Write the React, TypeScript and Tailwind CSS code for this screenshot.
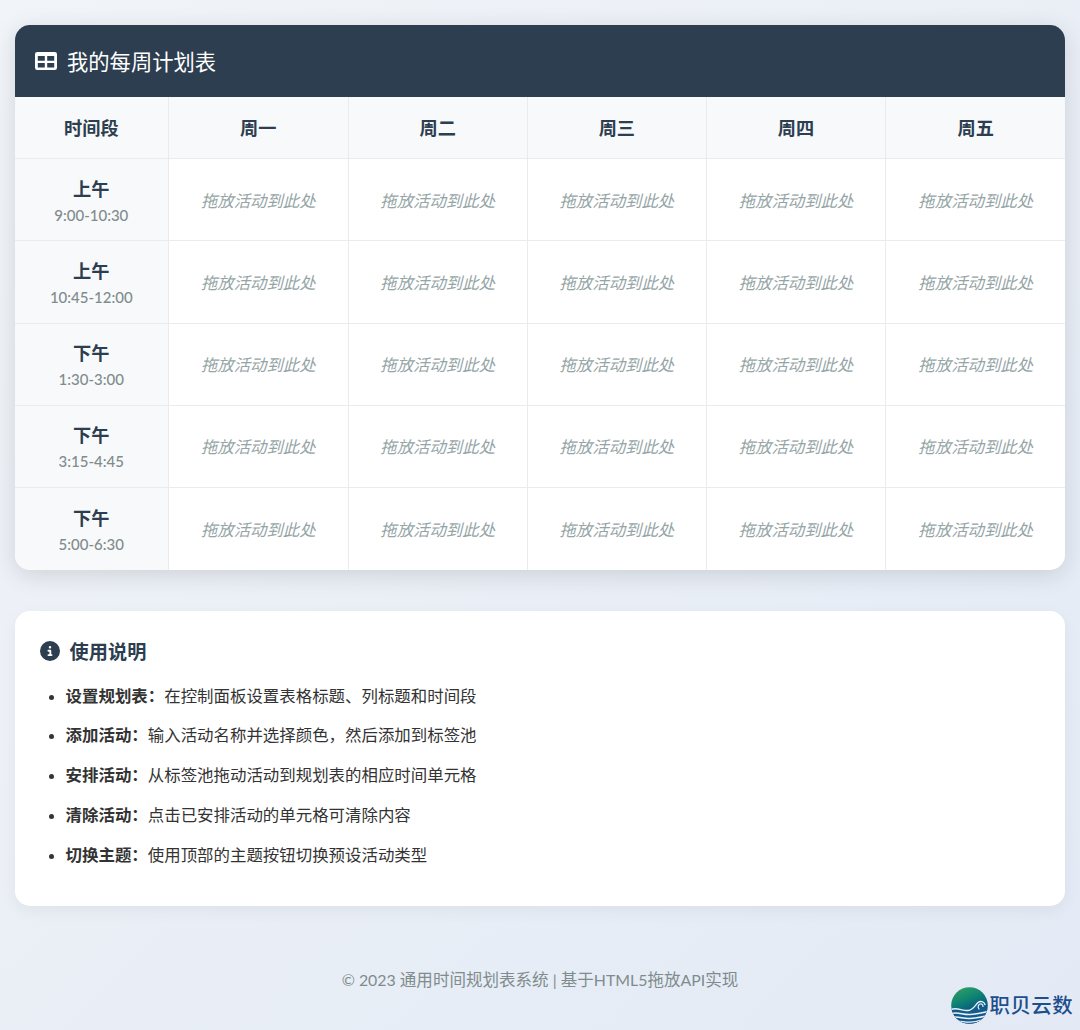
const font = { fontFamily: '"Lato", "Noto Sans CJK SC", sans-serif' };

const days = ["周一", "周二", "周三", "周四", "周五"];
const slots = [
  ["上午", "9:00-10:30"],
  ["上午", "10:45-12:00"],
  ["下午", "1:30-3:00"],
  ["下午", "3:15-4:45"],
  ["下午", "5:00-6:30"],
];
const tips = [
  ["设置规划表：", "在控制面板设置表格标题、列标题和时间段"],
  ["添加活动：", "输入活动名称并选择颜色，然后添加到标签池"],
  ["安排活动：", "从标签池拖动活动到规划表的相应时间单元格"],
  ["清除活动：", "点击已安排活动的单元格可清除内容"],
  ["切换主题：", "使用顶部的主题按钮切换预设活动类型"],
];

function TableIcon() {
  return (
    <svg className="mb-[1px]" width="22" height="18" viewBox="0 0 22 18" aria-hidden="true">
      <path
        fillRule="evenodd"
        fill="#ffffff"
        d="M2.2 0h17.6a2.2 2.2 0 0 1 2.2 2.2v13.6a2.2 2.2 0 0 1-2.2 2.2h-17.6a2.2 2.2 0 0 1-2.2-2.2v-13.6a2.2 2.2 0 0 1 2.2-2.2zM2.800 4v4.800h7v-4.800zM12.200 4v4.800h7v-4.800zM2.800 11v4.400h7v-4.400zM12.200 11v4.400h7v-4.400z"
      />
    </svg>
  );
}

function InfoIcon() {
  return (
    <svg className="mb-[2px]" width="20" height="20" viewBox="0 0 512 512" aria-hidden="true">
      <path
        fill="#2c3e50"
        d="M256 512A256 256 0 1 0 256 0a256 256 0 1 0 0 512zM216 336h24V272H216c-13.3 0-24-10.7-24-24s10.7-24 24-24h48c13.3 0 24 10.7 24 24v88h8c13.3 0 24 10.7 24 24s-10.7 24-24 24H216c-13.3 0-24-10.7-24-24s10.7-24 24-24zm40-208a32 32 0 1 1 0 64 32 32 0 1 1 0-64z"
      />
    </svg>
  );
}

function Logo() {
  return (
    <svg width="37" height="37" viewBox="0 0 37 37" aria-hidden="true">
      <defs>
        <linearGradient id="globe" x1="0.2" y1="0" x2="0.6" y2="1">
          <stop offset="0" stopColor="#2f9f63" />
          <stop offset="0.35" stopColor="#0f8572" />
          <stop offset="0.62" stopColor="#0a5f7c" />
          <stop offset="1" stopColor="#143f8c" />
        </linearGradient>
        <clipPath id="disc">
          <circle cx="18.5" cy="18.5" r="18.3" />
        </clipPath>
      </defs>
      <circle cx="18.5" cy="18.5" r="18.3" fill="url(#globe)" />
      <g clipPath="url(#disc)" fill="none" strokeLinecap="round">
        <path d="M0 22.500c6-2.500 11 1.500 17 1 5-.5 7-5 10-8 2.500-2 6-1 7 2 .6 2 1 4 3 5v14H0z" fill="#145a8c" stroke="none" />
        <path d="M0 22.500c6-2.500 11 1.500 17 1 5-.5 7-5 10-8 2.500-2 6-1 7 2" stroke="#e9f2f7" strokeWidth="1.4" />
        <path d="M28 22c-1.500-2-1-4 1-5 2-.7 3 1 3 2.500" stroke="#e9f2f7" strokeWidth="1.2" />
        <path d="M0 26.500c7-2 12 1.500 19 1 6-.3 11-1.500 18-3" stroke="#e9f2f7" strokeWidth="1.5" />
        <path d="M0 30.500c7-1.800 12 1.500 19 1 6-.3 11-1.500 18-3" stroke="#e9f2f7" strokeWidth="1.5" />
        <path d="M2 34.500c6-1.500 11 1 17 .6 5-.3 9-1 15-3" stroke="#e9f2f7" strokeWidth="1.4" />
      </g>
    </svg>
  );
}

export default function App() {
  return (
    <div
      className="relative h-[1030px] overflow-hidden bg-gradient-to-br from-[#f1f4f8] to-[#e3eaf5] pl-[14.6px] pt-[25px]"
      style={font}
    >
      <section className="w-[1050.8px] overflow-hidden rounded-[15px] bg-white shadow-[0_5px_25px_rgba(0,0,0,0.13)]">
        <header className="flex h-[72px] items-center gap-[10px] bg-[#2c3e50] pl-[20.4px] text-white">
          <TableIcon />
          <h1 className="pt-[3px] text-[21.3px] font-normal leading-none">我的每周计划表</h1>
        </header>
        <div className="grid grid-cols-[154.4px_179.6px_179.2px_179.2px_179.2px_179.2px] grid-rows-[62px_82px_82.5px_82px_82px_82.5px]">
          <div className="flex items-center justify-center border-r border-b border-[#e9ecef] bg-[#f8f9fa] pt-[3px] text-[18.2px] font-bold text-[#2c3e50]">
            时间段
          </div>
          {days.map((d, i) => (
            <div
              key={d}
              className={`flex items-center justify-center border-b border-[#e9ecef] bg-[#f8f9fa] pt-[3px] text-[18.2px] font-bold text-[#2c3e50] ${i < 4 ? "border-r" : ""}`}
            >
              {d}
            </div>
          ))}
          {slots.map(([label, time], r) => (
            <div key={time} className="contents">
              <div
                className={`flex flex-col items-center justify-center border-r border-[#e9ecef] bg-[#f8f9fa] pt-[2px] ${r < 4 ? "border-b" : ""}`}
              >
                <div className="text-[18.2px] font-bold leading-[24px] text-[#2c3e50]">{label}</div>
                <div className="pt-[4px] text-[15px] font-medium leading-[20px] text-[#7f8c8d]">{time}</div>
              </div>
              {days.map((d, i) => (
                <div
                  key={d}
                  className={`flex items-center justify-center border-[#e9ecef] pt-[3px] text-[16.4px] italic text-[#95a5a6] ${i < 4 ? "border-r" : ""} ${r < 4 ? "border-b" : ""}`}
                >
                  拖放活动到此处
                </div>
              ))}
            </div>
          ))}
        </div>
      </section>

      <section className="mt-[41px] h-[295px] w-[1050.8px] rounded-[15px] bg-white pl-[25px] pt-[28px] shadow-[0_5px_15px_rgba(0,0,0,0.05)]">
        <h2 className="flex items-center gap-[10px] text-[19.2px] font-bold leading-[26px] text-[#2c3e50]">
          <InfoIcon />
          使用说明
        </h2>
        <ul className="mt-[18.6px] list-disc pl-[26px] text-[16.45px] leading-[24px] text-[#333333]">
          {tips.map(([b, t]) => (
            <li key={b} className="mb-[15.8px]">
              <strong className="font-bold">{b}</strong>
              {t}
            </li>
          ))}
        </ul>
      </section>

      <footer className="mt-[64px] w-[1050.8px] text-center text-[15.9px] leading-[20px] text-[#7f8c8d]">
        © 2023 <span className="text-[16.55px]">通用时间规划表系统</span> | <span className="text-[16.55px]">基于</span>HTML5<span className="text-[16.55px]">拖放</span>API<span className="text-[16.55px]">实现</span>
      </footer>

      <div className="absolute left-[951px] top-[987px] flex items-center gap-[1.5px]">
        <Logo />
        <span className="text-[20.4px] font-medium leading-none tracking-[0.5px] text-[#1d4f8c]">职贝云数</span>
      </div>
    </div>
  );
}
